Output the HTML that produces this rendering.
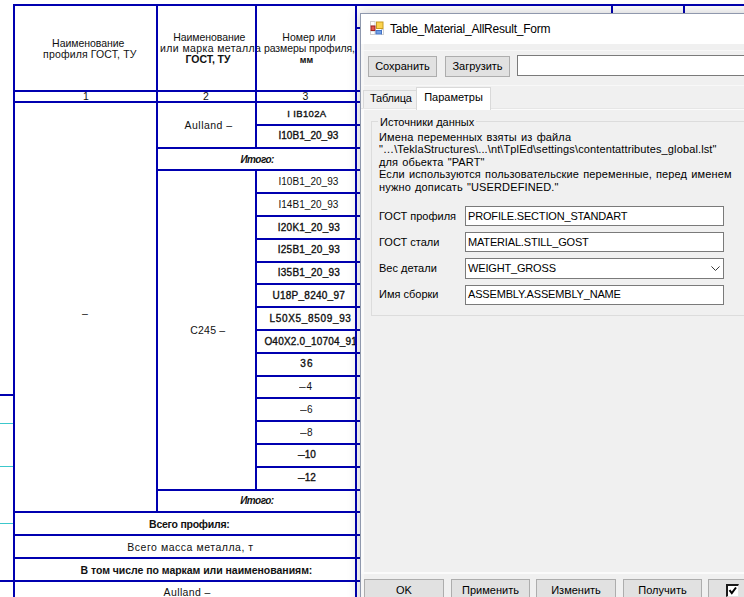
<!DOCTYPE html>
<html><head><meta charset="utf-8"><title>Table_Material_AllResult_Form</title>
<style>
html,body{margin:0;padding:0;}
body{width:744px;height:597px;overflow:hidden;background:#fff;position:relative;font-family:"Liberation Sans",sans-serif;}
.l{position:absolute;}
.t{position:absolute;height:14px;line-height:14px;white-space:nowrap;color:#111;}
#clip{position:absolute;left:0;top:0;width:357px;height:597px;overflow:hidden;}
#dlg{position:absolute;left:360px;top:13px;width:400px;height:600px;background:#f0f0f0;box-shadow:0 0 12px rgba(0,0,20,0.22);font-size:11px;color:#000;}
#ttl{position:absolute;left:0;top:0;width:400px;height:31px;background:#fff;}
#ttl span{position:absolute;left:30px;top:8px;font-size:12px;letter-spacing:-0.22px;line-height:16px;white-space:nowrap;}
.btn{position:absolute;box-sizing:border-box;border:1px solid #adadad;background:#e1e1e1;text-align:center;font-size:11px;line-height:18px;height:21px;white-space:nowrap;}
.tb{position:absolute;box-sizing:border-box;border:1px solid #7a7a7a;background:#fff;font-size:11px;line-height:16px;padding-left:2px;letter-spacing:-0.17px;white-space:nowrap;}
.lb{position:absolute;white-space:nowrap;font-size:11px;line-height:13px;}

</style></head><body>
<div class="t" style="left:52.1px;top:35.6px;letter-spacing:-0.05px;font-size:10.5px;">Наименование</div>
<div class="t" style="left:43.1px;top:46.9px;letter-spacing:0.14px;font-size:10.5px;">профиля ГОСТ, ТУ</div>
<div class="t" style="left:173.3px;top:29.9px;letter-spacing:-0.07px;font-size:10.5px;">Наименование</div>
<div class="t" style="left:160.1px;top:40.7px;letter-spacing:0.39px;font-size:10.5px;">или марка металла</div>
<div class="t" style="left:185.6px;top:52.1px;letter-spacing:-0.09px;font-size:10.5px;font-weight:bold;">ГОСТ, ТУ</div>
<div class="t" style="left:282.3px;top:29.9px;letter-spacing:0.02px;font-size:10.5px;">Номер или</div>
<div class="t" style="left:263.9px;top:40.7px;letter-spacing:-0.08px;font-size:10.5px;">размеры профиля,</div>
<div class="t" style="left:299.8px;top:52.7px;letter-spacing:-0.03px;font-size:9px;font-weight:bold;">мм</div>
<div class="t" style="left:83.1px;top:89.1px;letter-spacing:0px;font-size:10.5px;">1</div>
<div class="t" style="left:203.1px;top:89.1px;letter-spacing:0px;font-size:10.5px;">2</div>
<div class="t" style="left:302.6px;top:89.1px;letter-spacing:0px;font-size:10.5px;">3</div>
<div class="t" style="left:184.6px;top:117.6px;letter-spacing:0.46px;font-size:10.5px;">Aulland –</div>
<div class="t" style="left:82.1px;top:305.6px;letter-spacing:0px;font-size:10.5px;">–</div>
<div class="t" style="left:190.3px;top:322.6px;letter-spacing:0.19px;font-size:10.5px;">С245 –</div>
<div class="t" style="left:287.3px;top:106.7px;letter-spacing:0.34px;font-size:9.5px;-webkit-text-stroke:0.35px #111;">I IB102A</div>
<div class="t" style="left:278.4px;top:129.3px;letter-spacing:0.05px;font-size:10px;-webkit-text-stroke:0.35px #111;">I10B1_20_93</div>
<div class="t" style="left:240.4px;top:152.7px;letter-spacing:-0.52px;font-size:10px;font-weight:bold;font-style:italic;">Итого:</div>
<div class="t" style="left:278.4px;top:174.7px;letter-spacing:0.05px;font-size:10px;">I10B1_20_93</div>
<div class="t" style="left:278.4px;top:197.7px;letter-spacing:0.05px;font-size:10px;">I14B1_20_93</div>
<div class="t" style="left:277.7px;top:220.7px;letter-spacing:0.27px;font-size:10px;-webkit-text-stroke:0.35px #111;">I20K1_20_93</div>
<div class="t" style="left:277.7px;top:243.3px;letter-spacing:0.27px;font-size:10px;-webkit-text-stroke:0.35px #111;">I25B1_20_93</div>
<div class="t" style="left:277.7px;top:266.0px;letter-spacing:0.27px;font-size:10px;-webkit-text-stroke:0.35px #111;">I35B1_20_93</div>
<div class="t" style="left:272.5px;top:288.8px;letter-spacing:0.25px;font-size:10px;-webkit-text-stroke:0.35px #111;">U18P_8240_97</div>
<div class="t" style="left:269.6px;top:311.7px;letter-spacing:0.66px;font-size:10px;-webkit-text-stroke:0.35px #111;">L50X5_8509_93</div>
<div class="t" style="left:264.4px;top:334.6px;letter-spacing:0.2px;font-size:10px;-webkit-text-stroke:0.35px #111;">O40X2.0_10704_91</div>
<div class="t" style="left:300.3px;top:357.3px;letter-spacing:1.08px;font-size:10px;-webkit-text-stroke:0.35px #111;">36</div>
<div class="t" style="left:299.2px;top:380.1px;font-size:10px;"><span style="display:inline-block;width:7.2px;transform:scaleX(1.2);transform-origin:0 50%">–</span>4</div>
<div class="t" style="left:299.9px;top:403.1px;font-size:10px;"><span style="display:inline-block;width:7.2px;transform:scaleX(1.2);transform-origin:0 50%">–</span>6</div>
<div class="t" style="left:299.9px;top:425.9px;font-size:10px;"><span style="display:inline-block;width:7.2px;transform:scaleX(1.2);transform-origin:0 50%">–</span>8</div>
<div class="t" style="left:297.6px;top:448.3px;font-size:10px;-webkit-text-stroke:0.35px #111;"><span style="display:inline-block;width:7.2px;transform:scaleX(1.2);transform-origin:0 50%">–</span>10</div>
<div class="t" style="left:297.6px;top:471.1px;font-size:10px;-webkit-text-stroke:0.35px #111;"><span style="display:inline-block;width:7.2px;transform:scaleX(1.2);transform-origin:0 50%">–</span>12</div>
<div class="t" style="left:240.2px;top:494.1px;letter-spacing:-0.54px;font-size:10px;font-weight:bold;font-style:italic;">Итого:</div>
<div class="t" style="left:149.1px;top:517.1px;letter-spacing:-0.25px;font-size:10.5px;font-weight:bold;">Всего профиля:</div>
<div class="t" style="left:127.3px;top:539.9px;letter-spacing:0.53px;font-size:10.5px;">Всего масса металла, т</div>
<div class="t" style="left:80.6px;top:562.8px;letter-spacing:-0.04px;font-size:10.5px;font-weight:bold;">В том числе по маркам или наименованиям:</div>
<div class="t" style="left:163.6px;top:585.1px;letter-spacing:0.38px;font-size:10.5px;">Aulland –</div>
<div class="l" style="left:13px;top:4px;width:2px;height:593px;background:#0000b0"></div>
<div class="l" style="left:156px;top:4px;width:2px;height:507px;background:#0000b0"></div>
<div class="l" style="left:255px;top:4px;width:2px;height:143px;background:#0000b0"></div>
<div class="l" style="left:255px;top:169px;width:2px;height:320px;background:#0000b0"></div>
<div class="l" style="left:355px;top:4px;width:2px;height:593px;background:#0000b0"></div>
<div class="l" style="left:13px;top:4px;width:731px;height:2px;background:#0000b0"></div>
<div class="l" style="left:13px;top:90px;width:349px;height:2px;background:#0000b0"></div>
<div class="l" style="left:355px;top:27px;width:7px;height:2px;background:#0000b0"></div>
<div class="l" style="left:13px;top:101px;width:349px;height:2px;background:#0000b0"></div>
<div class="l" style="left:255px;top:124px;width:107px;height:2px;background:#0000b0"></div>
<div class="l" style="left:255px;top:169px;width:107px;height:2px;background:#0000b0"></div>
<div class="l" style="left:255px;top:192px;width:107px;height:2px;background:#0000b0"></div>
<div class="l" style="left:255px;top:215px;width:107px;height:2px;background:#0000b0"></div>
<div class="l" style="left:255px;top:238px;width:107px;height:2px;background:#0000b0"></div>
<div class="l" style="left:255px;top:261px;width:107px;height:2px;background:#0000b0"></div>
<div class="l" style="left:255px;top:283px;width:107px;height:2px;background:#0000b0"></div>
<div class="l" style="left:255px;top:306px;width:107px;height:2px;background:#0000b0"></div>
<div class="l" style="left:255px;top:329px;width:107px;height:2px;background:#0000b0"></div>
<div class="l" style="left:255px;top:352px;width:107px;height:2px;background:#0000b0"></div>
<div class="l" style="left:255px;top:375px;width:107px;height:2px;background:#0000b0"></div>
<div class="l" style="left:255px;top:397px;width:107px;height:2px;background:#0000b0"></div>
<div class="l" style="left:255px;top:420px;width:107px;height:2px;background:#0000b0"></div>
<div class="l" style="left:255px;top:443px;width:107px;height:2px;background:#0000b0"></div>
<div class="l" style="left:255px;top:466px;width:107px;height:2px;background:#0000b0"></div>
<div class="l" style="left:156px;top:147px;width:206px;height:2px;background:#0000b0"></div>
<div class="l" style="left:156px;top:169px;width:206px;height:2px;background:#0000b0"></div>
<div class="l" style="left:156px;top:489px;width:206px;height:2px;background:#0000b0"></div>
<div class="l" style="left:13px;top:511px;width:349px;height:2px;background:#0000b0"></div>
<div class="l" style="left:13px;top:534px;width:349px;height:2px;background:#0000b0"></div>
<div class="l" style="left:13px;top:557px;width:349px;height:2px;background:#0000b0"></div>
<div class="l" style="left:13px;top:580px;width:349px;height:2px;background:#0000b0"></div>
<div class="l" style="left:0px;top:394px;width:13px;height:2px;background:#0000b0"></div>
<div class="l" style="left:0px;top:580px;width:13px;height:2px;background:#0000b0"></div>
<div class="l" style="left:0px;top:423px;width:13px;height:1px;background:#3cc8cc"></div>
<div class="l" style="left:0px;top:466px;width:13px;height:1px;background:#3cc8cc"></div>
<div class="l" style="left:0px;top:523px;width:13px;height:1px;background:#3cc8cc"></div>
<div class="l" style="left:611px;top:4px;width:2px;height:10px;background:#0000b0"></div>
<div class="l" style="left:683px;top:4px;width:2px;height:10px;background:#0000b0"></div>
<div id="dlg">
 <div id="ttl">
  <svg style="position:absolute;left:10px;top:8px" width="14" height="14" viewBox="0 0 14 14">
   <rect x="0.5" y="0.5" width="4.5" height="4.5" fill="#fff" stroke="#d0d0d0" stroke-width="1"/>
   <rect x="0.5" y="10" width="4.5" height="3.5" fill="#fff" stroke="#d0d0d0" stroke-width="1"/>
   <rect x="11.5" y="8.5" width="2" height="5" fill="#fff" stroke="#d0d0d0" stroke-width="1"/>
   <rect x="6.5" y="1" width="6.5" height="6.5" fill="#fcd34d" stroke="#c79a1f" stroke-width="1"/>
   <rect x="1" y="5" width="4" height="4.5" fill="#e2574c" stroke="#9c1f1f" stroke-width="1"/>
   <rect x="6" y="9.5" width="5.5" height="3.5" fill="#6f9fe6" stroke="#4472c4" stroke-width="1"/>
  </svg>
  <span>Table_Material_AllResult_Form</span>
 </div>
 <div class="btn" style="left:8px;top:43px;width:69px;">Сохранить</div>
 <div class="btn" style="left:85px;top:43px;width:65px;">Загрузить</div>
 <div class="tb" style="left:157px;top:42px;width:260px;height:21px;"></div>
 <!-- tabs -->
 <div class="l" style="left:1px;top:31px;width:3px;height:570px;background:#f6f6f6;"></div>
 <div class="l" style="left:1px;top:37px;width:420px;height:1px;background:#f8f8f8;"></div>
 <div class="l" style="left:1px;top:72px;width:420px;height:1px;background:#f8f8f8;"></div>
 <div class="l" style="left:1px;top:95px;width:420px;height:466px;background:#fbfbfb;border-top:1px solid #e6e6e6;box-sizing:border-box;"></div>
 <div class="l" style="left:4px;top:97px;width:420px;height:462px;background:#f0f0f0;"></div>
 <div class="lb" style="left:3px;top:77px;width:54px;height:18px;line-height:15px;letter-spacing:-0.2px;padding-left:6px;background:#f0f0f0;border:1px solid #d9d9d9;border-bottom:none;box-sizing:border-box;">Таблица</div>
 <div class="lb" style="left:56px;top:74px;width:75px;height:23px;line-height:18px;text-align:center;background:#fff;border:1px solid #d9d9d9;border-bottom:none;box-sizing:border-box;">Параметры</div>
 <!-- groupbox -->
 <div class="l" style="left:11px;top:108px;width:420px;height:195px;border:1px solid #dcdcdc;box-sizing:border-box;"></div>
 <div class="lb" style="left:18px;top:103px;padding:0 2px;background:#f0f0f0;">Источники данных</div>
 <div class="lb" style="left:19px;top:118px;line-height:12.46px;letter-spacing:0.125px;word-spacing:1.0px;">Имена переменных взяты из файла<br>"…\TeklaStructures\...\nt\TplEd\settings\contentattributes_global.lst"<br>для обьекта "PART"<br>Если используются пользовательские переменные, перед именем<br>нужно дописать "USERDEFINED."</div>
 <div class="lb" style="left:19px;top:197px;">ГОСТ профиля</div>
 <div class="tb" style="left:105px;top:193px;width:259px;height:20px;line-height:18px;">PROFILE.SECTION_STANDART</div>
 <div class="lb" style="left:19px;top:223px;">ГОСТ стали</div>
 <div class="tb" style="left:105px;top:219px;width:259px;height:20px;line-height:18px;">MATERIAL.STILL_GOST</div>
 <div class="lb" style="left:19px;top:249px;">Вес детали</div>
 <div class="tb" style="left:105px;top:245px;width:259px;height:21px;line-height:19px;">WEIGHT_GROSS
   <svg style="position:absolute;right:3px;top:7px" width="9" height="5.4" viewBox="0 0 10 6"><path d="M0.5 0.5 L5 5 L9.5 0.5" fill="none" stroke="#333" stroke-width="1.1"/></svg></div>
 <div class="lb" style="left:19px;top:275px;">Имя сборки</div>
 <div class="tb" style="left:105px;top:272px;width:259px;height:20px;">ASSEMBLY.ASSEMBLY_NAME</div>
 <!-- bottom buttons -->
 <div class="btn" style="left:4px;top:566px;width:80px;height:24px;line-height:20px;">OK</div>
 <div class="btn" style="left:91px;top:566px;width:79px;height:24px;line-height:20px;">Применить</div>
 <div class="btn" style="left:176px;top:566px;width:80px;height:24px;line-height:20px;">Изменить</div>
 <div class="btn" style="left:263px;top:566px;width:79px;height:24px;line-height:20px;">Получить</div>
 <div class="btn" style="left:348px;top:566px;width:60px;height:24px;"></div>
 <div class="l" style="left:366px;top:571px;width:13px;height:13px;background:#fff;border:2px solid #1a1a1a;border-right:1px solid #e3e3e3;border-bottom:1px solid #e3e3e3;box-sizing:border-box;"></div>
 <svg style="position:absolute;left:368px;top:573px" width="10" height="10" viewBox="0 0 10 10"><path d="M1.5 4.2 L3.8 7.2 L8 1.5" fill="none" stroke="#000" stroke-width="2"/></svg>
 <div class="l" style="left:0;top:0;width:400px;height:600px;border:1px solid #8f98ad;box-sizing:border-box;"></div>
</div>

</body></html>
